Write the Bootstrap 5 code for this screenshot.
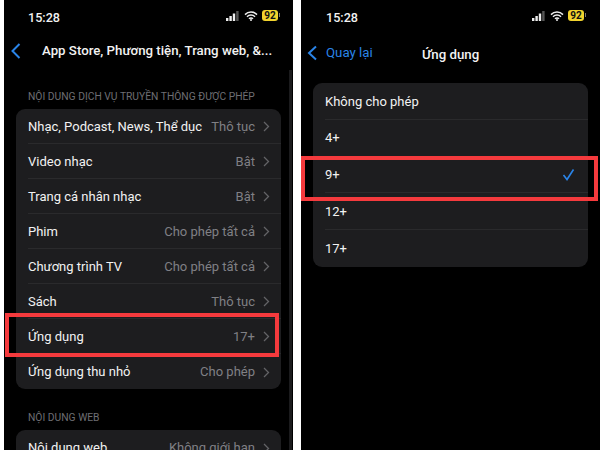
<!DOCTYPE html>
<html lang="en">
<head>
    <meta charset="UTF-8">
    <meta name="viewport" content="width=device-width, initial-scale=1.0">
    <title>Ứng dụng</title>
    <link href="https://cdn.jsdelivr.net/npm/bootstrap@5.3.3/dist/css/bootstrap.min.css" rel="stylesheet">
    <style>
        html, body { width: 600px; height: 450px; overflow: hidden; background: #fff; }
        body { font-family: Roboto, "Liberation Sans", sans-serif; color: #f2f2f2; }
        .shot { width: 600px; height: 450px; padding-left: 4px; gap: 8px; }
        .phone { background: #000; height: 450px; overflow: hidden; position: relative; }
        .phone-a { width: 289px; }
        .phone-b { width: 299px; }
        .status { height: 36px; font-size: 12.6px; font-weight: 500; padding-top: 10px; line-height: 16px; }
        .phone-a .status { padding-left: 24px; padding-right: 12px; }
        .phone-b .status { padding-left: 25px; padding-right: 13px; }
        .batt { background: #f2d32e; color: #111; font-size: 10px; font-weight: 700; line-height: 11px; height: 11px; border-radius: 3px; width: 16px; text-align: center; position: relative; margin-right: 3px; }
        .batt::after { content: ""; position: absolute; right: -2px; top: 3px; width: 1.5px; height: 4px; background: #777; }
        .sig-icon { margin-right: 1px; }
        .topbar { height: 30px; font-size: 13.25px; font-weight: 500; position: relative; }
        .phone-a .topbar { padding-left: 6px; }
        .phone-a .topbar-title { margin-left: 20px; }
        .phone-b .topbar { padding-left: 6px; margin-top: 2px; }
        .back-link { color: #2a84e8; font-weight: 400; }
        .phone-b .topbar-title { position: absolute; left: 121px; top: 7px; }
        .sect { font-size: 10.3px; color: #6e6e73; line-height: 12px; padding-left: 24px; }
        .sect-top { margin-top: 25px; margin-bottom: 6px; }
        .sect-web { margin-top: 23px; margin-bottom: 6px; }
        .group { background: #1d1d1f; border-radius: 9px; font-size: 13px; }
        .phone-a .group { margin-left: 12px; margin-right: 12px; }
        .phone-b .group { margin-left: 12px; margin-right: 12px; margin-top: 15px; }
        .cell { height: 35px; border-bottom: 1px solid #2a2a2c; margin-left: 12px; padding-top: 1px; }
        .phone-a .cell { padding-right: 11px; }
        .phone-b .cell { height: 36.8px; padding-right: 13px; }
        .cell:last-child { border-bottom: 0; }
        .cell-val { color: #808085; }
        .redbox { position: absolute; border: 4px solid #f53a3d; }
        .box-a { left: 1px; top: 313px; width: 274px; height: 44px; }
        .box-b { left: 0; top: 156px; width: 297px; height: 45px; }
        .scroll-mark { position: absolute; right: 1px; top: 70px; bottom: 0; width: 3px; background: #1b1b1d; }
    </style>
</head>
<body>
<div class="shot d-flex">
    <div class="phone phone-a">
        <div class="status d-flex justify-content-between align-items-start">
            <span>15:28</span>
            <span class="d-flex align-items-center gap-1">
                <svg class="sig-icon" width="13" height="10" viewBox="0 0 13 10"><rect x="0" y="7" width="2.4" height="3" fill="#eee"/><rect x="3.4" y="5" width="2.4" height="5" fill="#eee"/><rect x="6.8" y="2.5" width="2.4" height="7.5" fill="#eee"/><rect x="10.2" y="0" width="2.4" height="10" fill="#555"/></svg>
                <svg width="14" height="10" viewBox="0 0 14 10"><path d="M1 3.6a8.5 8.5 0 0 1 12 0M3 5.8a5.6 5.6 0 0 1 8 0M5 7.8a2.8 2.8 0 0 1 4 0" fill="none" stroke="#eee" stroke-width="1.5"/><circle cx="7" cy="9" r="1" fill="#eee"/></svg>
                <span class="batt">92</span>
            </span>
        </div>
        <div class="topbar d-flex align-items-center">
            <svg width="12" height="18" viewBox="0 0 12 18"><path d="M9.5 2 2.5 9l7 7" fill="none" stroke="#2a84e8" stroke-width="2"/></svg>
            <span class="topbar-title text-nowrap">App Store, Phương tiện, Trang web, &amp;...</span>
        </div>
        <div class="sect sect-top">NỘI DUNG DỊCH VỤ TRUYỀN THÔNG ĐƯỢC PHÉP</div>
        <div class="group" id="list-a"></div>
        <div class="sect sect-web">NỘI DUNG WEB</div>
        <div class="group">
            <div class="cell d-flex justify-content-between align-items-center"><span>Nội dung web</span><span class="cell-val d-flex align-items-center gap-2">Không giới hạn <svg width="7" height="11" viewBox="0 0 7 11"><path d="m1 1 4.5 4.5L1 10" fill="none" stroke="#636366" stroke-width="1.3"/></svg></span></div>
        </div>
        <div class="scroll-mark"></div>
        <div class="redbox box-a"></div>
    </div>
    <div class="phone phone-b">
        <div class="status d-flex justify-content-between align-items-start">
            <span>15:28</span>
            <span class="d-flex align-items-center gap-1">
                <svg class="sig-icon" width="13" height="10" viewBox="0 0 13 10"><rect x="0" y="7" width="2.4" height="3" fill="#eee"/><rect x="3.4" y="5" width="2.4" height="5" fill="#eee"/><rect x="6.8" y="2.5" width="2.4" height="7.5" fill="#eee"/><rect x="10.2" y="0" width="2.4" height="10" fill="#555"/></svg>
                <svg width="14" height="10" viewBox="0 0 14 10"><path d="M1 3.6a8.5 8.5 0 0 1 12 0M3 5.8a5.6 5.6 0 0 1 8 0M5 7.8a2.8 2.8 0 0 1 4 0" fill="none" stroke="#eee" stroke-width="1.5"/><circle cx="7" cy="9" r="1" fill="#eee"/></svg>
                <span class="batt">92</span>
            </span>
        </div>
        <div class="topbar d-flex align-items-center">
            <span class="back-link d-flex align-items-center gap-2">
                <svg width="11" height="16" viewBox="0 0 11 16"><path d="M9 1.5 2 8l7 6.5" fill="none" stroke="#2a84e8" stroke-width="2"/></svg>
                Quay lại
            </span>
            <span class="topbar-title">Ứng dụng</span>
        </div>
        <div class="group" id="list-b"></div>
        <div class="redbox box-b"></div>
    </div>
</div>
<script>
    const chevron = '<svg width="7" height="11" viewBox="0 0 7 11"><path d="m1 1 4.5 4.5L1 10" fill="none" stroke="#636366" stroke-width="1.3"/></svg>';
    const check = '<svg width="13" height="13" viewBox="0 0 13 13"><path d="m1.5 7 3.5 4.5L11.5 1.5" fill="none" stroke="#2a84e8" stroke-width="1.6"/></svg>';
    const rowsA = [
        ['Nhạc, Podcast, News, Thể dục', 'Thô tục'],
        ['Video nhạc', 'Bật'],
        ['Trang cá nhân nhạc', 'Bật'],
        ['Phim', 'Cho phép tất cả'],
        ['Chương trình TV', 'Cho phép tất cả'],
        ['Sách', 'Thô tục'],
        ['Ứng dụng', '17+'],
        ['Ứng dụng thu nhỏ', 'Cho phép']
    ];
    document.getElementById('list-a').innerHTML = rowsA.map(r => `
        <div class="cell d-flex justify-content-between align-items-center text-nowrap">
            <span>${r[0]}</span><span class="cell-val d-flex align-items-center gap-2">${r[1]} ${chevron}</span>
        </div>`).join('');
    const rowsB = ['Không cho phép', '4+', '9+', '12+', '17+'];
    document.getElementById('list-b').innerHTML = rowsB.map(r => `
        <div class="cell d-flex justify-content-between align-items-center">
            <span>${r}</span>${r === '9+' ? check : ''}
        </div>`).join('');
</script>
<script src="https://cdn.jsdelivr.net/npm/bootstrap@5.3.3/dist/js/bootstrap.bundle.min.js"></script>
</body>
</html>
